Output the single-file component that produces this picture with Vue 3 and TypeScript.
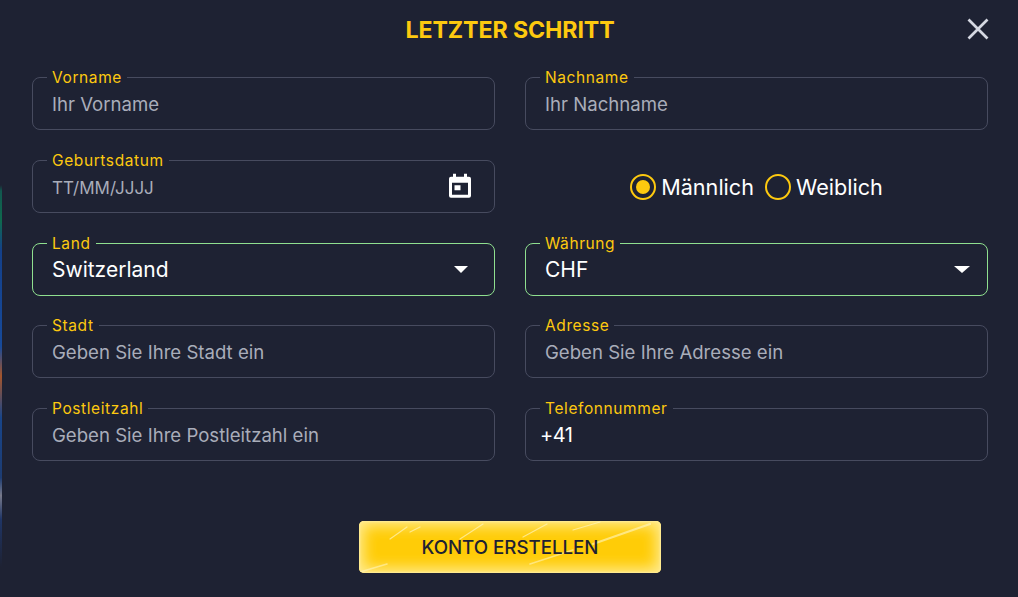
<script setup lang="ts">
interface Field {
  label: string
  placeholder?: string
  value?: string
  kind?: 'select' | 'date' | 'tel'
}
const rows: Field[][] = [
  [
    { label: 'Vorname', placeholder: 'Ihr Vorname' },
    { label: 'Nachname', placeholder: 'Ihr Nachname' },
  ],
  [{ label: 'Geburtsdatum', placeholder: 'TT/MM/JJJJ', kind: 'date' }],
  [
    { label: 'Land', value: 'Switzerland', kind: 'select' },
    { label: 'Währung', value: 'CHF', kind: 'select' },
  ],
  [
    { label: 'Stadt', placeholder: 'Geben Sie Ihre Stadt ein' },
    { label: 'Adresse', placeholder: 'Geben Sie Ihre Adresse ein' },
  ],
  [
    { label: 'Postleitzahl', placeholder: 'Geben Sie Ihre Postleitzahl ein' },
    { label: 'Telefonnummer', value: '+41', kind: 'tel' },
  ],
]
</script>

<template>
  <div class="page">
    <div class="strip"></div>
    <main class="modal">
      <header class="head">
        <h1 class="title">LETZTER SCHRITT</h1>
        <button class="close" aria-label="Schließen">
          <svg width="22" height="22" viewBox="0 0 22 22">
            <path d="M1.500 1.500 20.500 20.500M20.500 1.500 1.500 20.500" stroke="#d5d8e2" stroke-width="2.700" fill="none" />
          </svg>
        </button>
      </header>
      <form class="grid" @submit.prevent>
        <template v-for="(row, i) in rows" :key="i">
          <fieldset
            v-for="f in row"
            :key="f.label"
            class="field"
            :class="{ active: f.kind === 'select', tel: f.kind === 'tel' }"
          >
            <legend class="legend">{{ f.label }}</legend>
            <span v-if="f.value" class="value">{{ f.value }}</span>
            <span v-else class="placeholder" :class="{ date: f.kind === 'date' }">{{ f.placeholder }}</span>
            <svg v-if="f.kind === 'date'" class="cal" width="24" height="26" viewBox="0 0 24 26">
              <path
                fill="#fff"
                d="M5 1h3v3h8V1h3v3h2a2 2 0 0 1 2 2v17a2 2 0 0 1-2 2H3a2 2 0 0 1-2-2V6a2 2 0 0 1 2-2h2V1Zm-1 9v12h16V10H4Zm2.500 2.500h6v5h-6v-5Z"
                fill-rule="evenodd"
              />
            </svg>
            <span v-if="f.kind === 'select'" class="caret" :class="{ wide: f.label === 'Währung' }"></span>
          </fieldset>
          <div v-if="row.length === 1" class="gender">
            <label class="radio"><span class="dot on"></span>Männlich</label>
            <label class="radio"><span class="dot"></span>Weiblich</label>
          </div>
        </template>
      </form>
      <div class="actions">
        <button class="submit">
          <svg class="streaks" width="302" height="52" viewBox="0 0 302 52">
            <g stroke="#fff6c4" fill="none" stroke-linecap="round">
              <path d="M31 18 48 6M51 11 61 6M101 18 124 3M164 16 188 3M214 9 241 1" stroke-width="1.200" opacity=".65" />
              <path d="M234 23 291 3" stroke-width="2.200" opacity=".6" />
              <path d="M171 43 214 29M1 51 28 43" stroke-width="1.600" opacity=".55" />
            </g>
          </svg>
          <span class="submit-label">KONTO ERSTELLEN</span>
        </button>
      </div>
    </main>
  </div>
</template>

<style>
html, body { margin: 0; background: #1e2233; }
</style>

<style scoped>
.page {
  display: flex;
  width: 1018px;
  height: 597px;
  overflow: hidden;
  background: #1e2233;
  font-family: Inter, "Open Sans", sans-serif;
}
.strip {
  flex: 0 0 2px;
  background: linear-gradient(180deg, #1e2233 0 31%, #12584f 32%, #0f6a4e 37%, #14408a 42%, #174a9a 58%, #a4552c 63%, #18458a 70%, #1d3c72 80%, #77798a 83%, #1f3566 87%, #1e2233 95%);
}
.modal {
  flex: 1;
  padding: 0 30px;
  display: flex;
  flex-direction: column;
}
.head {
  height: 59px;
  display: flex;
  align-items: center;
  justify-content: center;
  position: relative;
}
.title {
  margin: 0;
  font-size: 23.200px;
  font-weight: 700;
  letter-spacing: -0.1px;
  color: #fdc90f;
}
.close {
  position: absolute;
  right: -1px;
  top: 18px;
  padding: 0;
  border: 0;
  background: none;
  line-height: 0;
}
.grid {
  display: grid;
  grid-template-columns: 463px 463px;
  column-gap: 30px;
  grid-auto-rows: 60px;
  row-gap: 22.750px;
  margin-top: 11px;
}
.field {
  position: relative;
  box-sizing: border-box;
  margin: 0;
  min-width: 0;
  height: 60px;
  padding: 0 19px 7px;
  border: 1px solid #474b5f;
  border-radius: 8px;
  display: flex;
  align-items: center;
}
.field.active { border-color: #8fe08f; }
.field.tel { padding-left: 14px; }
.legend {
  padding: 0 5px;
  margin-left: -5px;
  font-size: 15.500px;
  line-height: 15px;
  letter-spacing: 0.6px;
  color: #fdc90f;
}
.tel .legend { margin-left: 0; }
.placeholder {
  font-size: 18.600px;
  color: #a9adba;
}
.placeholder.date { font-size: 17px; margin-top: 3px; }
.value {
  font-size: 21px;
  color: #fff;
}
.tel .value { font-size: 20px; letter-spacing: -0.5px; }
.cal { position: absolute; right: 22px; top: 50%; transform: translateY(-66%); }
.caret {
  position: absolute;
  right: 26px;
  top: 15px;
  width: 0;
  height: 0;
  border-left: 7.500px solid transparent;
  border-right: 7.500px solid transparent;
  border-top: 7px solid #fff;
}
.caret.wide {
  right: 17px;
  border-left-width: 8px;
  border-right-width: 8px;
}
.gender {
  display: flex;
  align-items: center;
  justify-content: center;
  gap: 11px;
  padding-top: 8px;
}
.radio {
  display: flex;
  align-items: center;
  gap: 5px;
  font-size: 21.600px;
  color: #fff;
}
.dot {
  box-sizing: border-box;
  width: 26px;
  height: 26px;
  border: 2.500px solid #fdc90f;
  border-radius: 50%;
  display: flex;
  align-items: center;
  justify-content: center;
}
.dot.on::after {
  content: "";
  width: 14px;
  height: 14px;
  border-radius: 50%;
  background: #fdc90f;
}
.actions {
  display: flex;
  justify-content: center;
  margin-top: 60px;
}
.submit {
  position: relative;
  width: 302px;
  height: 52px;
  padding: 0;
  border: 0;
  border-radius: 5px;
  overflow: hidden;
  font-family: inherit;
  font-size: 18.700px;
  font-weight: 500;
  color: #1e2233;
  background: #ffcc07;
  box-shadow: inset 0 0 14px 5px #ffeb8f, inset 0 0 2px 1px #fff3bd;
}
.streaks { position: absolute; inset: 0; }
.submit-label { position: relative; }
</style>
